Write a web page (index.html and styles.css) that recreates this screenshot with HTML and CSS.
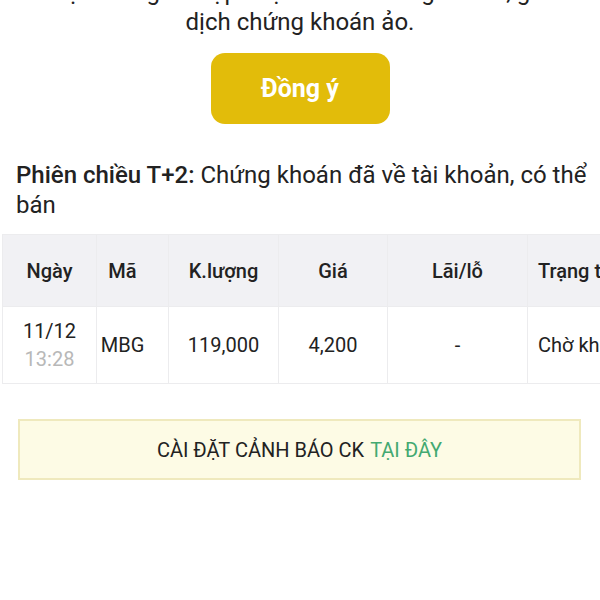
FILE: index.html
```html
<!DOCTYPE html>
<html lang="vi">
<head>
    <meta charset="UTF-8">
    <meta name="viewport" content="width=device-width, initial-scale=1.0">
    <title>Phiên chiều T+2</title>
<link rel="stylesheet" href="styles.css">
</head>
<body>
    <div class="page">
        <p class="intro">được thông tin cập nhật về mã chứng khoán, giao dịch chứng khoán ảo.</p>

        <div class="actions">
            <button class="button" type="button">Đồng ý</button>
        </div>

        <p class="session"><b>Phiên chiều T+2:</b> Chứng khoán đã về tài khoản, có thể bán</p>

        <div class="table-wrap">
            <table class="orders">
                <colgroup>
                    <col class="col-date">
                    <col class="col-code">
                    <col class="col-qty">
                    <col class="col-price">
                    <col class="col-pnl">
                    <col class="col-status">
                </colgroup>
                <thead>
                    <tr>
                        <th>Ngày</th>
                        <th class="code">Mã</th>
                        <th>K.lượng</th>
                        <th>Giá</th>
                        <th>Lãi/lỗ</th>
                        <th class="status">Trạng thái</th>
                    </tr>
                </thead>
                <tbody>
                    <tr>
                        <td><span class="date">11/12</span><span class="time">13:28</span></td>
                        <td class="code">MBG</td>
                        <td>119,000</td>
                        <td>4,200</td>
                        <td>-</td>
                        <td class="status">Chờ khớp</td>
                    </tr>
                </tbody>
            </table>
        </div>

        <div class="alert">CÀI ĐẶT CẢNH BÁO CK <a href="#" class="alert-link">TẠI ĐÂY</a></div>
    </div>
</body>
</html>
```

FILE: styles.css
```css
* {
    box-sizing: border-box;
}

body {
    margin: 0;
    font-family: Roboto, "Noto Sans", sans-serif;
    font-size: 24px;
    line-height: 30px;
    color: #222;
    background-color: #fff;
    overflow: hidden;
}

.page {
    width: 600px;
}

.intro {
    margin: -23px 0 0;
    padding: 0 30px;
    text-align: center;
}

.actions {
    display: flex;
    justify-content: center;
    margin-top: 16px;
}

.button {
    width: 179px;
    height: 71px;
    border: 0;
    border-radius: 14px;
    background-color: #e2bc0a;
    color: #fff;
    font-family: Roboto, sans-serif;
    font-size: 25px;
    font-weight: bold;
    cursor: pointer;
}

.session {
    margin: 36px 0 14px;
    padding: 0 6px 0 16px;
}

.session b {
    font-weight: 500;
}

.table-wrap {
    overflow: hidden;
    padding-left: 2px;
}

.orders {
    table-layout: fixed;
    width: 700px;
    border-collapse: collapse;
}

.col-date { width: 94px; }
.col-code { width: 72px; }
.col-qty { width: 110px; }
.col-price { width: 109px; }
.col-pnl { width: 140px; }
.col-status { width: 175px; }

.orders th,
.orders td {
    border: 1px solid #ececee;
    text-align: center;
    padding: 0;
    font-size: 20px;
}

.orders th {
    height: 72px;
    background-color: #f1f1f4;
    font-weight: 500;
    color: #222;
}

.orders td {
    height: 77px;
    color: #222;
}

.orders .code {
    padding-right: 20px;
}

.orders .status {
    text-align: left;
    padding-left: 10px;
}

.date,
.time {
    display: block;
    line-height: 28px;
}

.time {
    color: #b8b8b8;
}

.alert {
    margin: 35px 19px 0 18px;
    height: 61px;
    display: flex;
    align-items: center;
    justify-content: center;
    background-color: #fdfbe5;
    border: 2px solid #efe9bd;
    font-size: 20px;
    color: #222;
}

.alert-link {
    margin-left: 6px;
    color: #43a971;
    text-decoration: none;
}
```
